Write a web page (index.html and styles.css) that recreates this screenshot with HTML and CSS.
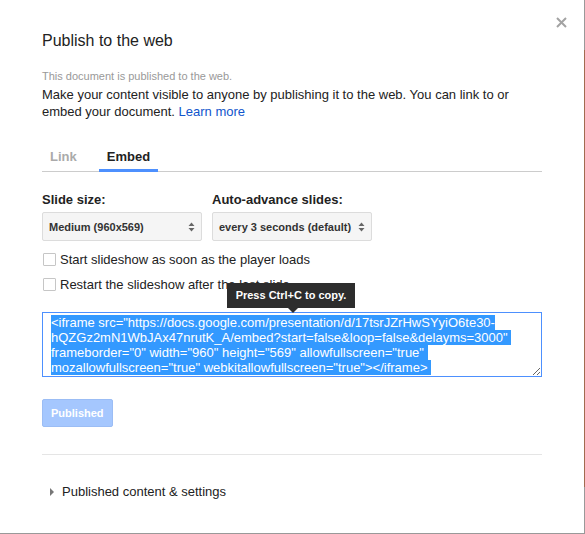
FILE: index.html
```html
<!DOCTYPE html>
<html lang="en">
<head>
    <meta charset="UTF-8">
    <title>Publish to the web</title>
    <link rel="stylesheet" href="styles.css">
</head>
<body>
    <div class="dialog">
        <!-- close button -->
        <span class="close">
            <svg width="11" height="11" viewBox="0 0 11 11"><path d="M1 1L10 10M10 1L1 10" stroke="#a3a3a3" stroke-width="2"/></svg>
        </span>

        <h1 class="dialog-title">Publish to the web</h1>
        <p class="status">This document is published to the web.</p>
        <p class="intro">Make your content visible to anyone by publishing it to the web. You can link to or embed your document. <a href="#" class="link">Learn more</a></p>

        <div class="tabs">
            <div class="tab">Link</div>
            <div class="tab active">Embed</div>
        </div>

        <div class="options">
            <div class="field">
                <div class="field-label">Slide size:</div>
                <div class="select">
                    <span>Medium (960x569)</span>
                    <svg class="arrows" width="7" height="10" viewBox="0 0 7 10"><path d="M0.5 4L3.5 0.5L6.5 4Z M0.5 6L3.5 9.5L6.5 6Z" fill="#666"/></svg>
                </div>
            </div>
            <div class="field">
                <div class="field-label">Auto-advance slides:</div>
                <div class="select">
                    <span>every 3 seconds (default)</span>
                    <svg class="arrows" width="7" height="10" viewBox="0 0 7 10"><path d="M0.5 4L3.5 0.5L6.5 4Z M0.5 6L3.5 9.5L6.5 6Z" fill="#666"/></svg>
                </div>
            </div>
        </div>

        <div class="check first"><span class="box"></span>Start slideshow as soon as the player loads</div>
        <div class="check"><span class="box"></span>Restart the slideshow after the last slide</div>

        <div class="code-wrap">
            <div class="embed-code"><span class="sel">&lt;iframe src="https://docs.google.com/presentation/d/17tsrJZrHwSYyiO6te30-
hQZGz2mN1WbJAx47nrutK_A/embed?start=false&amp;loop=false&amp;delayms=3000" 
frameborder="0" width="960" height="569" allowfullscreen="true" 
mozallowfullscreen="true" webkitallowfullscreen="true"&gt;&lt;/iframe&gt; </span></div>
            <div class="tooltip">Press Ctrl+C to copy.</div>
        </div>

        <button class="btn" disabled>Published</button>

        <div class="divider"></div>

        <div class="details"><span class="caret"></span>Published content &amp; settings</div>
    </div>
</body>
</html>
```

FILE: styles.css
```css
/* base */
body {
    margin: 0;
    background: #fff;
    font-family: "Liberation Sans", Arial, sans-serif;
    color: #222;
}

/* dialog frame */
.dialog {
    position: relative;
    box-sizing: border-box;
    width: 585px;
    height: 534px;
    padding: 30px 42px 0;
    border-style: solid;
    border-width: 0 1px 1px 0;
    border-image: linear-gradient(to bottom, #999 0, #999 51px, #a26b50 51px, #a26b50 487px, #999 487px) 1;
}

.close {
    position: absolute;
    top: 17px;
    right: 17px;
    width: 11px;
    height: 11px;
    display: block;
}

.close svg {
    display: block;
}

.dialog-title {
    margin: 0;
    font-size: 16px;
    font-weight: normal;
    line-height: 22px;
    color: #222;
}

.status {
    margin: 17px 0 0;
    font-size: 11px;
    line-height: 14px;
    color: #999;
}

.intro {
    margin: 3px 0 0;
    font-size: 13px;
    line-height: 17px;
}

.link {
    color: #15c;
    text-decoration: none;
}

/* tabs */
.tabs {
    display: flex;
    margin-top: 21px;
    border-bottom: 1px solid #ccc;
}

.tab {
    padding: 8px 8px 4px;
    margin-bottom: -1px;
    font-size: 13px;
    font-weight: bold;
    line-height: 16px;
    color: #aaa;
    border-bottom: 3px solid transparent;
}

.tab:first-child {
    margin-right: 14px;
}

.tab.active {
    color: #222;
    border-bottom-color: #4d90fe;
}

/* slide options */
.options {
    display: flex;
    gap: 10px;
    margin-top: 20px;
}

.field-label {
    font-size: 13px;
    font-weight: bold;
    line-height: 16px;
}

.select {
    box-sizing: border-box;
    width: 160px;
    height: 29px;
    margin-top: 4px;
    padding: 0 6px 0 6px;
    display: flex;
    align-items: center;
    justify-content: space-between;
    background: #f5f5f5;
    border: 1px solid #dcdcdc;
    border-radius: 2px;
    font-size: 11px;
    font-weight: bold;
    color: #333;
}

.arrows {
    display: block;
}

/* checkboxes */
.check {
    display: flex;
    align-items: center;
    gap: 4px;
    height: 17px;
    margin-top: 8px;
    font-size: 13px;
}

.check.first {
    margin-top: 10px;
}

.box {
    box-sizing: border-box;
    width: 13px;
    height: 13px;
    margin-left: 1px;
    border: 1px solid #c6c6c6;
    border-radius: 1px;
    background: #fff;
}

/* embed code */
.code-wrap {
    position: relative;
    margin-top: 19px;
}

.embed-code {
    box-sizing: border-box;
    width: 500px;
    height: 65px;
    padding: 2px 8px;
    border: 1px solid #4d90fe;
    font-size: 13px;
    line-height: 15px;
    white-space: pre;
    overflow: hidden;
    resize: both;
}

.sel {
    background: #3399ff;
    color: #fff;
}

.tooltip {
    position: absolute;
    top: -29px;
    left: 185px;
    width: 128px;
    height: 25px;
    background: #2d2d2d;
    color: #fff;
    font-size: 11px;
    font-weight: bold;
    line-height: 25px;
    text-align: center;
}

.tooltip::after {
    content: '';
    position: absolute;
    top: 100%;
    left: 61px;
    border-left: 5px solid transparent;
    border-right: 5px solid transparent;
    border-top: 5px solid #2d2d2d;
}

/* publish button */
.btn {
    display: block;
    height: 28px;
    margin-top: 22px;
    padding: 0 8px;
    background: #a5c7fe;
    border: 1px solid #9bbdf5;
    border-radius: 2px;
    font-family: inherit;
    font-size: 11px;
    font-weight: bold;
    color: #fff;
}

.divider {
    height: 1px;
    margin-top: 27px;
    background: #e5e5e5;
}

.details {
    display: flex;
    align-items: center;
    height: 17px;
    margin-top: 28px;
    font-size: 13px;
}

.caret {
    width: 0;
    height: 0;
    margin: 0 8px 0 8px;
    border-top: 4px solid transparent;
    border-bottom: 4px solid transparent;
    border-left: 4px solid #777;
}
```
